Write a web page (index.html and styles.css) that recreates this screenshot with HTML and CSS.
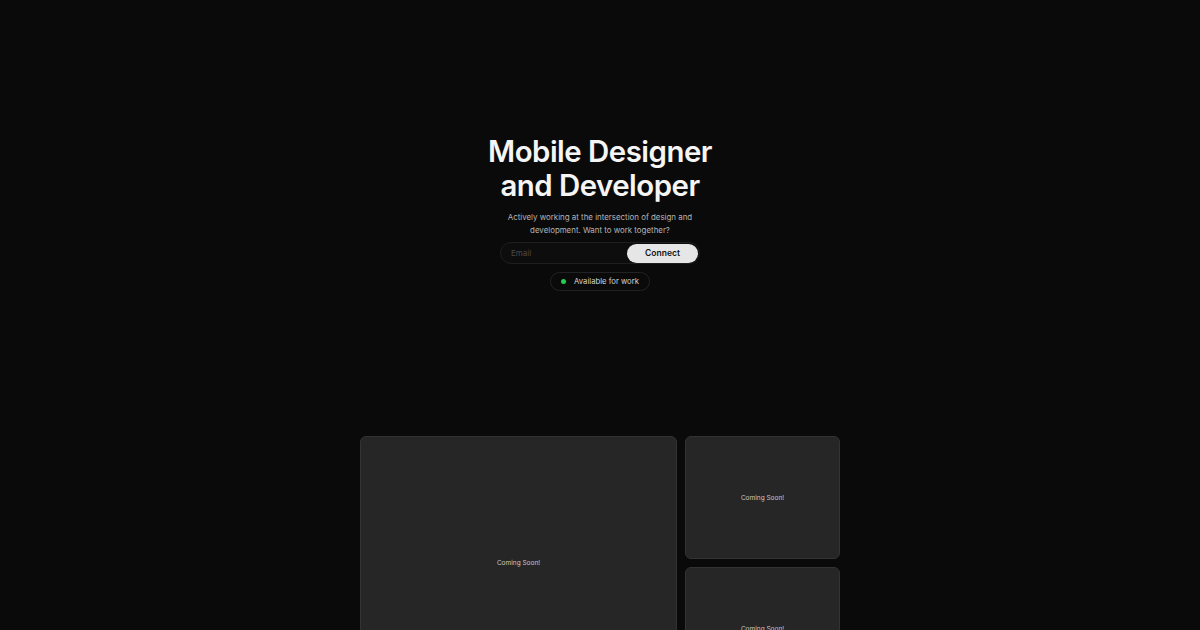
FILE: index.html
```html
<!DOCTYPE html>
<html lang="en">
<head>
    <meta charset="UTF-8">
    <meta name="viewport" content="width=device-width, initial-scale=1.0">
    <title>Mobile Designer and Developer</title>
    <link rel="stylesheet" href="styles.css">
</head>
<body>
    <section class="hero">
        <h1>Mobile Designer<br>and Developer</h1>
        <p class="intro">Actively working at the intersection of design and<br>development. Want to work together?</p>
        <form class="connect-form">
            <input type="email" placeholder="Email">
            <button type="submit">Connect</button>
        </form>
        <div class="status">
            <span class="dot"></span>
            Available for work
        </div>
    </section>

    <section class="work">
        <div class="card card-large">Coming Soon!</div>
        <div class="card">Coming Soon!</div>
        <div class="card">Coming Soon!</div>
    </section>
</body>
</html>
```
FILE: styles.css
```css
body {
    margin: 0;
    background: #0a0a0a;
    color: #fff;
    font-family: Inter, "Noto Sans", sans-serif;
    min-height: 100vh;
}
.hero {
    display: flex;
    flex-direction: column;
    align-items: center;
    text-align: center;
    padding-top: 135px;
}
h1 {
    margin: 0;
    font-size: 29.4px;
    font-weight: 600;
    line-height: 34px;
    letter-spacing: -0.5px;
    color: #f5f5f5;
}
.intro {
    margin: 8px 0 0;
    font-size: 7.9px;
    line-height: 13px;
    color: #b5b5b5;
}
.connect-form {
    display: flex;
    align-items: center;
    width: 200px;
    height: 22px;
    margin-top: 5px;
    box-sizing: border-box;
    border: 1px solid #1e1e1e;
    border-radius: 12px;
    background: #0d0d0d;
}
.connect-form input {
    flex: 1;
    min-width: 0;
    background: transparent;
    border: none;
    outline: none;
    padding: 0 0 0 10px;
    font-family: inherit;
    font-size: 8px;
    color: #ddd;
}
.connect-form input::placeholder {
    color: #4a4a4a;
}
.connect-form button {
    width: 71px;
    height: 19px;
    margin-right: 1px;
    border: none;
    border-radius: 10px;
    background: #e6e6e6;
    color: #111;
    font-family: inherit;
    font-size: 8.5px;
    font-weight: 600;
    cursor: pointer;
}
.status {
    display: flex;
    align-items: center;
    gap: 8px;
    height: 19px;
    margin-top: 8px;
    padding: 0 10px;
    box-sizing: border-box;
    border: 1px solid #222;
    border-radius: 10px;
    font-size: 7.7px;
    color: #d5d5d5;
}
.dot {
    width: 5px;
    height: 5px;
    border-radius: 50%;
    background: #1fd14a;
}
.work {
    display: grid;
    grid-template-columns: 317px 155px;
    grid-template-rows: 123px 123px;
    gap: 8px;
    width: 480px;
    margin: 145px auto 0;
}
.card {
    display: flex;
    align-items: center;
    justify-content: center;
    background: #262626;
    border: 1px solid #333;
    border-radius: 6px;
    font-size: 6.5px;
    color: #c8c8c8;
}
.card-large {
    grid-row: span 2;
}
```
